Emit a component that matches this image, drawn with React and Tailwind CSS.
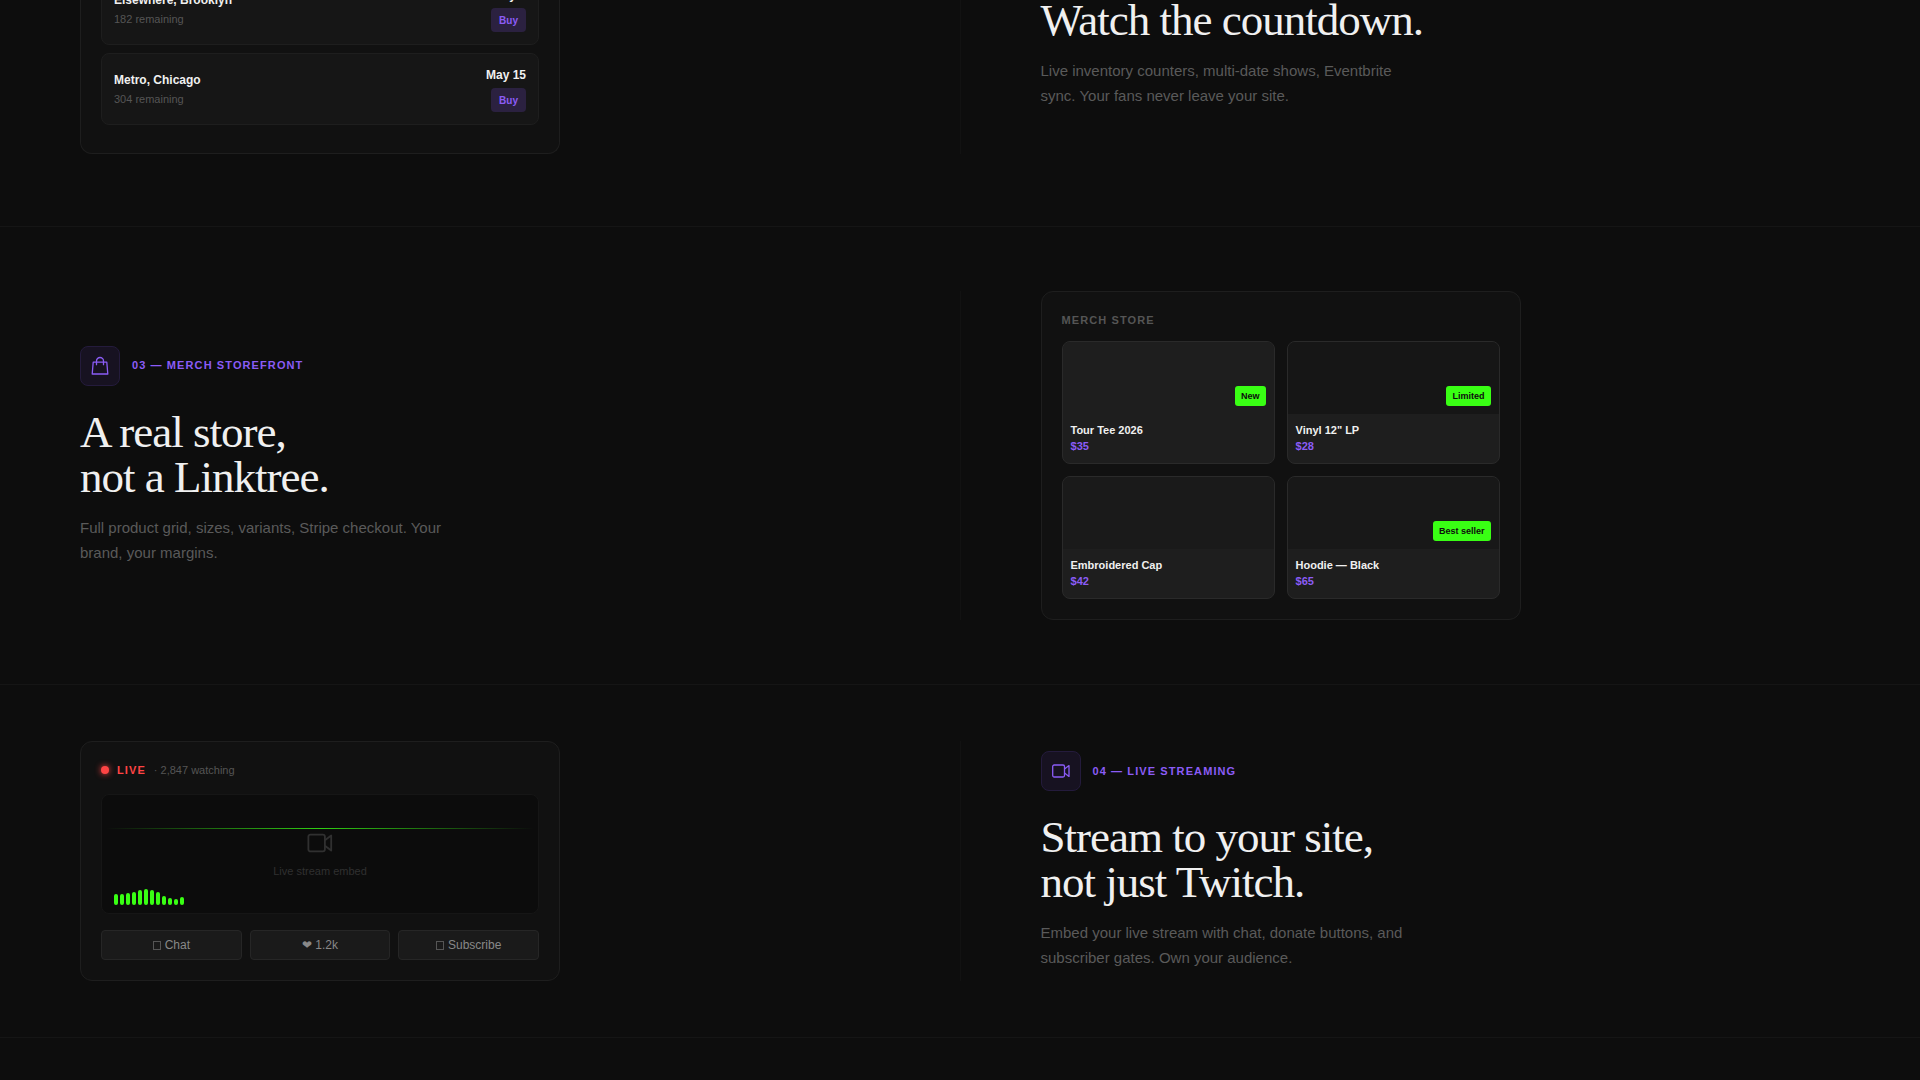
const shows = [
  { venue: "Elsewhere, Brooklyn", remaining: 182, date: "May 9" },
  { venue: "Metro, Chicago", remaining: 304, date: "May 15" },
];

const products = [
  { name: "Tour Tee 2026", price: 35, tag: "New", image: "bg-[#1e1e1e]" },
  { name: 'Vinyl 12" LP', price: 28, tag: "Limited", image: "bg-[#161616]" },
  { name: "Embroidered Cap", price: 42, image: "bg-[#1a1a1a]" },
  { name: "Hoodie — Black", price: 65, tag: "Best seller", image: "bg-[#181818]" },
];

const levels = [11, 11, 12, 13, 15, 16, 15, 13, 9, 7, 6, 8];

const actions = [
  { label: "Chat", box: true },
  { label: "❤ 1.2k" },
  { label: "Subscribe", box: true },
];

function BagIcon() {
  return (
    <svg className="size-5" viewBox="0 0 20 20" fill="none" stroke="currentColor" strokeWidth="1.3">
      <path d="M3.2 6.2h13.6l1 11.8H2.2z" strokeLinejoin="round" />
      <path d="M6.5 8.7V5a3.5 3.5 0 0 1 7 0v3.7" strokeLinecap="round" />
    </svg>
  );
}

function VideoIcon({ className }) {
  return (
    <svg className={className} viewBox="0 0 20 20" fill="none" stroke="currentColor" strokeWidth="1.3">
      <rect x="1.7" y="4" width="11.8" height="12" rx="1.5" />
      <path d="M13.5 8l4.5-3.4v10.8L13.5 12" strokeLinejoin="round" />
    </svg>
  );
}

function Section({ className, children }) {
  return (
    <section className={`border-b border-[#151515] ${className}`}>
      <div className="grid grid-cols-[1fr_1px_1fr]">{children}</div>
    </section>
  );
}

function Divider() {
  return <div className="bg-[#121212]" />;
}

function Card({ className = "rounded-xl border pt-5", children }) {
  return (
    <div className={`w-full max-w-[480px] border-[#1e1e1e] bg-[#111111] px-5 pb-5 ${className}`}>
      {children}
    </div>
  );
}

function Label({ icon, children }) {
  return (
    <div className="mb-6 flex items-center gap-3 text-[#8b5cf6]">
      <div className="flex size-10 items-center justify-center rounded-lg border border-[#241b3c] bg-[#171221]">
        {icon}
      </div>
      <span className="text-[11px] leading-[17px] font-bold tracking-[0.1em] uppercase">{children}</span>
    </div>
  );
}

function Heading({ children }) {
  return (
    <h2 className="mb-[15px] font-['Liberation_Serif',serif] text-[45px] leading-[45px] tracking-[-1px] text-[#f0f0f0]">
      {children}
    </h2>
  );
}

function Copy({ children }) {
  return <p className="max-w-[380px] pb-px text-[15px] leading-[25px] text-[#5a5a5a]">{children}</p>;
}

export default function App() {
  return (
    <div className="h-screen overflow-hidden bg-[#0d0d0d] font-['Liberation_Sans',sans-serif]">
      {/* Ticketing */}
      <Section className="-mt-[27px] pb-[72px]">
        <div className="px-20">
          <Card className="rounded-b-xl border-x border-b">
            {shows.map((show) => (
              <div
                key={show.venue}
                className="mb-2 flex items-center justify-between rounded-lg border border-[#1e1e1e] bg-[#161616] p-3"
              >
                <div>
                  <p className="text-xs leading-[18px] font-bold text-[#f0f0f0]">{show.venue}</p>
                  <p className="mt-0.5 text-[11px] leading-[17px] text-[#555555]">{show.remaining} remaining</p>
                </div>
                <div className="flex flex-col items-end gap-1">
                  <span className="text-xs leading-[18px] font-bold text-[#f0f0f0]">{show.date}</span>
                  <button className="h-6 rounded bg-[#2b2140] px-2 text-[10px] font-bold text-[#8b5cf6]">Buy</button>
                </div>
              </div>
            ))}
          </Card>
        </div>
        <Divider />
        <div className="px-20 pt-[25px]">
          <Heading>Watch the countdown.</Heading>
          <Copy>Live inventory counters, multi-date shows, Eventbrite sync. Your fans never leave your site.</Copy>
        </div>
      </Section>

      {/* Merch */}
      <Section className="py-16">
        <div className="flex flex-col justify-center px-20">
          <Label icon={<BagIcon />}>03 — Merch Storefront</Label>
          <Heading>
            A real store,
            <br />
            not a Linktree.
          </Heading>
          <Copy>Full product grid, sizes, variants, Stripe checkout. Your brand, your margins.</Copy>
        </div>
        <Divider />
        <div className="px-20">
          <Card>
            <h3 className="mb-3 text-[11px] leading-[17px] font-bold tracking-[0.1em] text-[#555555] uppercase">
              Merch Store
            </h3>
            <div className="grid grid-cols-2 gap-3">
              {products.map((product) => (
                <div key={product.name} className="overflow-hidden rounded-lg border border-[#2a2a2a] bg-[#1e1e1e]">
                  <div className={`flex h-[72px] items-end justify-end p-2 ${product.image}`}>
                    {product.tag && (
                      <span className="rounded-[3px] bg-[#39ff14] px-1.5 text-[9px] leading-5 font-bold text-[#0d0d0d]">
                        {product.tag}
                      </span>
                    )}
                  </div>
                  <div className="px-2 pt-2 pb-[9px] text-[11px] leading-4 font-bold">
                    <p className="text-[#f0f0f0]">{product.name}</p>
                    <p className="text-[#8b5cf6]">${product.price}</p>
                  </div>
                </div>
              ))}
            </div>
          </Card>
        </div>
      </Section>

      {/* Live streaming */}
      <Section className="py-14">
        <div className="px-20">
          <Card>
            <div className="mb-4 flex items-center gap-2 text-[11px] leading-4">
              <span className="size-2 rounded-full bg-[#ff4444] shadow-[0_0_6px_#ff4444]" />
              <span className="font-bold tracking-[0.1em] text-[#ff4444]">LIVE</span>
              <span className="text-[#555555]">· 2,847 watching</span>
            </div>
            <div className="relative mb-4 flex h-[120px] flex-col items-center justify-center gap-1.5 overflow-hidden rounded-lg border border-[#161616] bg-[#0c0c0c] text-[#303030]">
              <div className="absolute inset-x-1 top-[33px] h-px bg-linear-to-r from-transparent via-[#39ff14] to-transparent opacity-80" />
              <VideoIcon className="size-7" />
              <span className="text-[11px] leading-[17px]">Live stream embed</span>
              <div className="absolute bottom-2 left-3 flex items-end gap-0.5">
                {levels.map((level, index) => (
                  <span key={index} className="w-1 rounded-xs bg-[#39ff14]" style={{ height: level }} />
                ))}
              </div>
            </div>
            <div className="grid grid-cols-3 gap-2">
              {actions.map((action) => (
                <button
                  key={action.label}
                  className="flex h-[30px] items-center justify-center gap-1 rounded-sm border border-[#262626] bg-[#1a1a1a] text-xs text-[#888888]"
                >
                  {action.box && <span className="h-[9px] w-2 border border-[#555555]" />}
                  {action.label}
                </button>
              ))}
            </div>
          </Card>
        </div>
        <Divider />
        <div className="flex flex-col justify-center px-20">
          <Label icon={<VideoIcon className="size-5" />}>04 — Live Streaming</Label>
          <Heading>
            Stream to your site,
            <br />
            not just Twitch.
          </Heading>
          <Copy>Embed your live stream with chat, donate buttons, and subscriber gates. Own your audience.</Copy>
        </div>
      </Section>
    </div>
  );
}
